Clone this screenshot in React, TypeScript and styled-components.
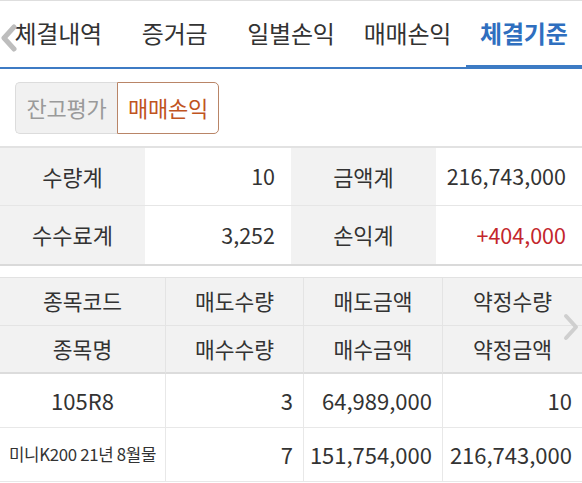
import React from "react";
import styled, { createGlobalStyle } from "styled-components";

const Global = createGlobalStyle`
  html, body { margin: 0; padding: 0; background: #fff; }
  body { font-family: "Noto Sans CJK KR", "Noto Sans", sans-serif; color: #333; overflow: hidden; }
  * { box-sizing: border-box; }
`;

const Page = styled.div`
  width: 582px;
  height: 483px;
  position: relative;
  overflow: hidden;
`;

const TabBar = styled.div`
  position: relative;
  display: grid;
  grid-template-columns: repeat(5, 1fr);
  height: 69px;
  border-top: 1px solid #dedede;
  border-bottom: 2px solid #3d7bc4;
`;

const Tab = styled.div<{ $active?: boolean }>`
  position: relative;
  display: flex;
  align-items: center;
  justify-content: center;
  font-size: 24px;
  letter-spacing: -0.2px;
  white-space: nowrap;
  color: ${(p) => (p.$active ? "#2f6fbf" : "#333")};
  font-weight: ${(p) => (p.$active ? 700 : 400)};
  padding-bottom: 3px;
  &::after {
    content: "";
    display: ${(p) => (p.$active ? "block" : "none")};
    position: absolute;
    left: 0;
    right: 0;
    bottom: -2px;
    height: 4px;
    background: #3d7bc4;
  }
`;

const Chevron = styled.div<{ $left?: number; $right?: number; $top: number }>`
  position: absolute;
  top: ${(p) => p.$top}px;
  ${(p) => (p.$left !== undefined ? `left: ${p.$left}px;` : "")}
  ${(p) => (p.$right !== undefined ? `right: ${p.$right}px;` : "")}
  width: 18px;
  height: 28px;
`;

const SegmentArea = styled.div`
  padding: 13px 15px 12px;
  display: flex;
`;

const SegButton = styled.div<{ $active?: boolean }>`
  width: 102px;
  height: 52px;
  display: flex;
  align-items: center;
  justify-content: center;
  font-size: 22px;
  letter-spacing: -0.2px;
  padding-bottom: 2px;
  color: ${(p) => (p.$active ? "#c0541f" : "#9a9a9a")};
  background: ${(p) => (p.$active ? "#fff" : "#f1f1f1")};
  border: 1px solid ${(p) => (p.$active ? "#b98567" : "#dcdcdc")};
  border-radius: ${(p) => (p.$active ? "0 5px 5px 0" : "5px 0 0 5px")};
  ${(p) => (p.$active ? "" : "border-right: none;")}
`;

const Summary = styled.div`
  display: grid;
  grid-template-columns: 145px 146px 145px 146px;
  border-top: 2px solid #e2e2e2;
  border-bottom: 2px solid #dadada;
`;

const SumCell = styled.div<{ $label?: boolean; $red?: boolean; $last?: boolean }>`
  height: 58px;
  display: flex;
  align-items: center;
  justify-content: ${(p) => (p.$label ? "center" : "flex-end")};
  padding: 0 ${(p) => (p.$label ? 0 : 16)}px 2px 0;
  font-size: ${(p) => (p.$label ? 22 : 21.5)}px;
  white-space: nowrap;
  background: ${(p) => (p.$label ? "#f2f2f2" : "#fff")};
  color: ${(p) => (p.$red ? "#c3262c" : "#333")};
  border-bottom: ${(p) => (p.$last ? "none" : "1px solid #e6e6e6")};
`;

const Gap = styled.div`
  height: 11px;
`;

const Grid = styled.div`
  display: grid;
  grid-template-columns: 166px 138px 139px 139px;
  border-top: 1px solid #e2e2e2;
`;

const HeadCell = styled.div<{ $end?: boolean; $lastCol?: boolean }>`
  height: 48px;
  display: flex;
  align-items: center;
  justify-content: center;
  font-size: 21.5px;
  background: #f2f2f2;
  color: #333;
  padding-bottom: 2px;
  border-right: ${(p) => (p.$lastCol ? "none" : "1px solid #e4e4e4")};
  border-bottom: ${(p) => (p.$end ? "2px solid #dcdcdc" : "1px solid #e4e4e4")};
`;

const DataCell = styled.div<{ $center?: boolean; $small?: boolean; $lastCol?: boolean }>`
  height: 54px;
  display: flex;
  align-items: center;
  justify-content: ${(p) => (p.$center ? "center" : "flex-end")};
  padding: 0 ${(p) => (p.$center ? 0 : 10)}px 2px 0;
  font-size: ${(p) => (p.$small ? 16.8 : 22)}px;
  letter-spacing: ${(p) => (p.$small ? "-0.3px" : "0")};
  color: #333;
  white-space: nowrap;
  border-right: ${(p) => (p.$lastCol ? "none" : "1px solid #e8e8e8")};
  border-bottom: 1px solid #e8e8e8;
`;

const LeftChev = () => (
  <svg width="18" height="28" viewBox="0 0 18 28">
    <path d="M14 3 L4 14 L14 25" fill="none" stroke="#bdbdbd" strokeWidth="5" strokeLinecap="round" strokeLinejoin="round" />
  </svg>
);

const RightChev = () => (
  <svg width="18" height="28" viewBox="0 0 18 28">
    <path d="M4 3 L14 14 L4 25" fill="none" stroke="#cfcfcf" strokeWidth="4" strokeLinecap="round" strokeLinejoin="round" />
  </svg>
);

const tabs = ["체결내역", "증거금", "일별손익", "매매손익", "체결기준"];

export default function App() {
  return (
    <Page>
      <Global />
      <TabBar>
        {tabs.map((t, i) => (
          <Tab key={t} $active={i === 4}>
            {t}
          </Tab>
        ))}
      </TabBar>
      <SegmentArea>
        <SegButton>잔고평가</SegButton>
        <SegButton $active>매매손익</SegButton>
      </SegmentArea>
      <Summary>
        <SumCell $label>수량계</SumCell>
        <SumCell>10</SumCell>
        <SumCell $label>금액계</SumCell>
        <SumCell>216,743,000</SumCell>
        <SumCell $label $last>수수료계</SumCell>
        <SumCell $last>3,252</SumCell>
        <SumCell $label $last>손익계</SumCell>
        <SumCell $last $red>+404,000</SumCell>
      </Summary>
      <Gap />
      <Grid>
        <HeadCell>종목코드</HeadCell>
        <HeadCell>매도수량</HeadCell>
        <HeadCell>매도금액</HeadCell>
        <HeadCell $lastCol>약정수량</HeadCell>
        <HeadCell $end>종목명</HeadCell>
        <HeadCell $end>매수수량</HeadCell>
        <HeadCell $end>매수금액</HeadCell>
        <HeadCell $end $lastCol>약정금액</HeadCell>
        <DataCell $center>105R8</DataCell>
        <DataCell>3</DataCell>
        <DataCell>64,989,000</DataCell>
        <DataCell $lastCol>10</DataCell>
        <DataCell $center $small>미니K200 21년 8월물</DataCell>
        <DataCell>7</DataCell>
        <DataCell>151,754,000</DataCell>
        <DataCell $lastCol>216,743,000</DataCell>
      </Grid>
      <Chevron $left={0} $top={24}>
        <LeftChev />
      </Chevron>
      <Chevron $right={2} $top={313}>
        <RightChev />
      </Chevron>
    </Page>
  );
}
